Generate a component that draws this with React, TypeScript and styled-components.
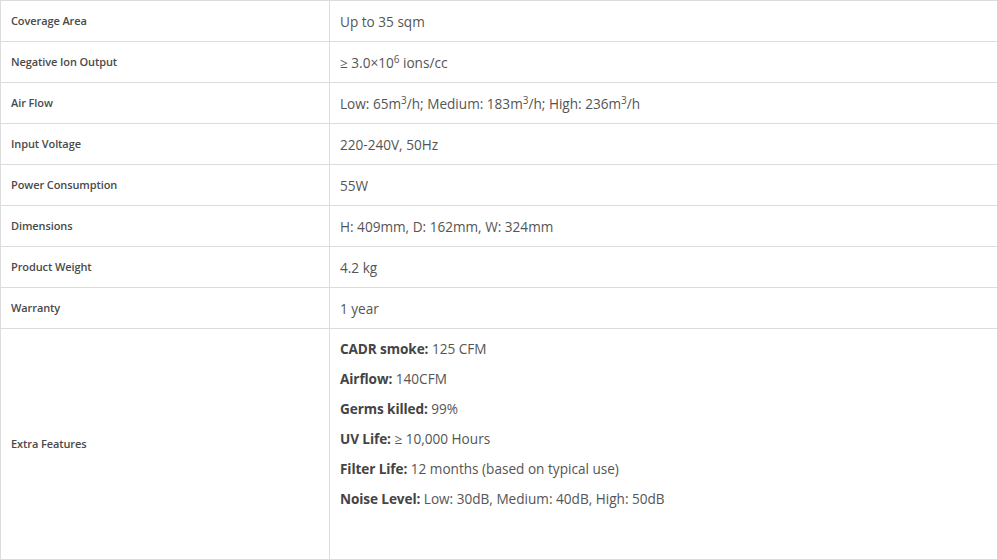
import React from "react";
import styled, { createGlobalStyle } from "styled-components";

const Global = createGlobalStyle`
  html, body { margin: 0; padding: 0; background: #fff; }
  body { font-family: "Open Sans", "Noto Sans", sans-serif; overflow: hidden; }
`;

const Table = styled.table`
  width: 1000px;
  border-collapse: collapse;
  table-layout: fixed;
  color: #555;
`;

const Row = styled.tr``;

const Label = styled.td`
  border: 1px solid #dcdcdc;
  padding: 0 10px 2px;
  height: 41px;
  box-sizing: border-box;
  font-size: 11px;
  font-weight: 600;
  color: #4a4a4a;
  vertical-align: middle;
  letter-spacing: -0.1px;
`;

const Value = styled.td<{ $tall?: boolean }>`
  border: 1px solid #dcdcdc;
  padding: ${(p) => (p.$tall ? "10px 10px 50px" : "0 10px")};
  height: ${(p) => (p.$tall ? "231px" : "41px")};
  box-sizing: border-box;
  font-size: 13.6px;
  color: #555;
  vertical-align: ${(p) => (p.$tall ? "top" : "middle")};
  letter-spacing: 0;
`;

const Sup = styled.sup`
  font-size: 10px;
  line-height: 0;
  vertical-align: 5px;
`;

const Line = styled.p`
  margin: 0 0 10px;
  line-height: 20px;
  &:last-child { margin-bottom: 0; }
`;

const Key = styled.strong`
  font-weight: 700;
  color: #444;
  letter-spacing: -0.1px;
`;

const rows: [string, React.ReactNode][] = [
  ["Coverage Area", "Up to 35 sqm"],
  ["Negative Ion Output", <>≥ 3.0×10<Sup>6</Sup> ions/cc</>],
  [
    "Air Flow",
    <>
      Low: 65m<Sup>3</Sup>/h; Medium: 183m<Sup>3</Sup>/h; High: 236m<Sup>3</Sup>/h
    </>,
  ],
  ["Input Voltage", "220-240V, 50Hz"],
  ["Power Consumption", "55W"],
  ["Dimensions", "H: 409mm, D: 162mm, W: 324mm"],
  ["Product Weight", "4.2 kg"],
  ["Warranty", "1 year"],
];

const extras: [string, string][] = [
  ["CADR smoke:", "125 CFM"],
  ["Airflow:", "140CFM"],
  ["Germs killed:", "99%"],
  ["UV Life:", "≥ 10,000 Hours"],
  ["Filter Life:", "12 months (based on typical use)"],
  ["Noise Level:", "Low: 30dB, Medium: 40dB, High: 50dB"],
];

export default function App() {
  return (
    <>
      <Global />
      <Table>
        <colgroup>
          <col style={{ width: "329px" }} />
          <col />
        </colgroup>
        <tbody>
          {rows.map(([l, v]) => (
            <Row key={l}>
              <Label>{l}</Label>
              <Value>{v}</Value>
            </Row>
          ))}
          <Row>
            <Label>Extra Features</Label>
            <Value $tall>
              {extras.map(([k, v]) => (
                <Line key={k}>
                  <Key>{k}</Key> {v}
                </Line>
              ))}
            </Value>
          </Row>
        </tbody>
      </Table>
    </>
  );
}
